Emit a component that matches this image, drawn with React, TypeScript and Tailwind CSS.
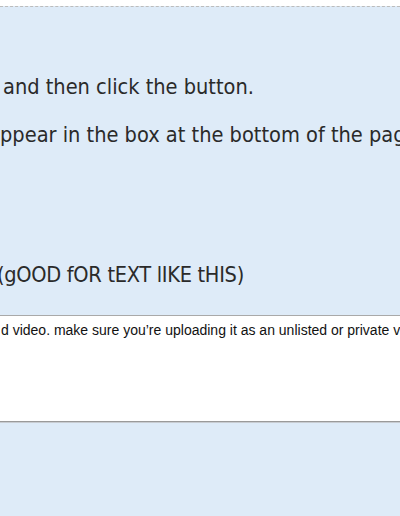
export default function App() {
  return (
    <div className="w-[400px] h-[516px] overflow-hidden bg-white flex flex-col">
      <div className="h-[6px] shrink-0" />
      <div className="shrink-0 h-[309px] border-t border-dashed border-[#bcbcbc] bg-[#deebf8] overflow-hidden font-['DejaVu_Sans',sans-serif] [font-stretch:condensed] text-[21.6px] leading-[26px] text-[#2a2a2a] whitespace-nowrap">
        <p className="pt-[67px] pl-[3px]">and then click the button.</p>
        <p className="mt-[22px]">ppear in the box at the bottom of the page.</p>
        <p className="mt-[114px] -ml-[3px] tracking-[-0.3px]">(gOOD fOR tEXT lIKE tHIS)</p>
      </div>
      <div className="shrink-0 h-[107px] bg-white border-t border-b border-t-[#a9a9a9] border-b-[#9a9a9a] overflow-hidden">
        <p className="pt-[4px] pl-[1px] font-['Liberation_Sans',Arial,sans-serif] text-[14px] text-[#111] whitespace-nowrap">
          d video. make sure you’re uploading it as an unlisted or private video.
        </p>
      </div>
      <div className="flex-1 border-t border-[#c8ccd2] bg-[#deebf8]" />
    </div>
  );
}
